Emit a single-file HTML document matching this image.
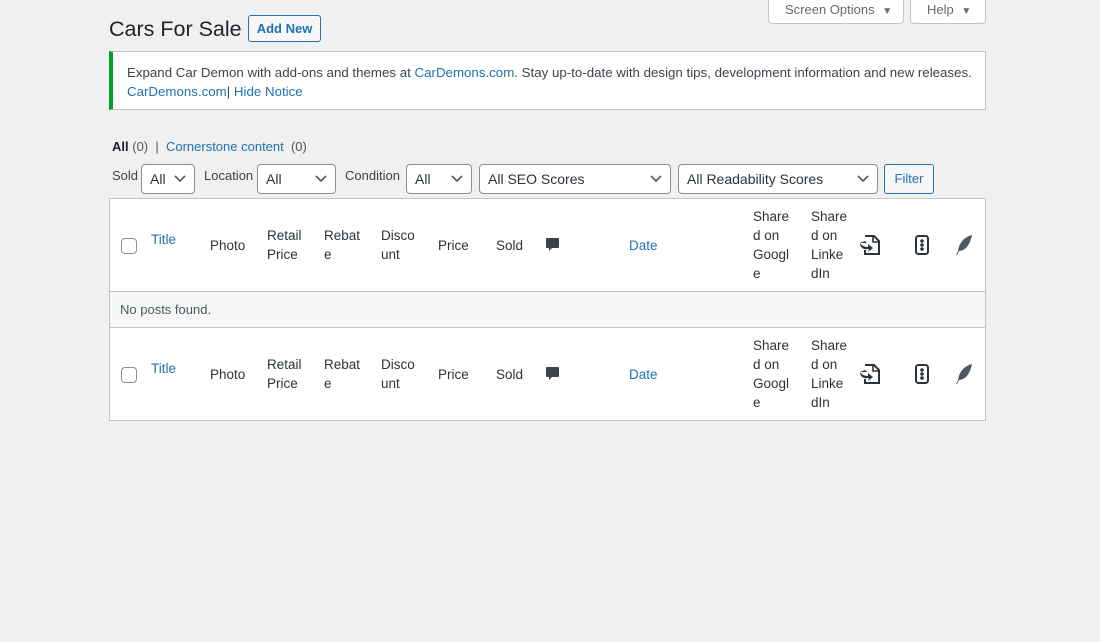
<!DOCTYPE html>
<html><head><meta charset="utf-8"><style>
*{margin:0;padding:0;box-sizing:border-box}
body{width:1100px;height:642px;background:#f0f0f1;font-family:"Liberation Sans",sans-serif;font-size:13px;color:#3c434a;position:relative;overflow:hidden}
.a{position:absolute;white-space:nowrap}
a,.l{color:#2271b1;text-decoration:none}
.btn{position:absolute;border:1px solid #2271b1;color:#2271b1;background:#f6f7f7;border-radius:3px;text-align:center}
.sel{position:absolute;height:30px;border:1px solid #8c8f94;border-radius:4px;background:#fff;color:#2c3338;font-size:14px;line-height:28px;padding-left:8px}
.sel svg{position:absolute;right:8px;top:10px}
.hd{position:absolute;line-height:19px;font-size:13.5px;color:#2c3338}
.cb{position:absolute;width:16px;height:16px;border:1px solid #8c8f94;border-radius:4px;background:#fff}
</style></head><body>
<div class="a" style="left:768px;top:-2px;width:136px;height:26px;background:#fff;border:1px solid #c3c4c7;border-radius:0 0 4px 4px;font-size:13px;color:#646970;line-height:22px;padding-left:16px">Screen Options <span style="font-size:10px;margin-left:4px">▼</span></div>
<div class="a" style="left:910px;top:-2px;width:76px;height:26px;background:#fff;border:1px solid #c3c4c7;border-radius:0 0 4px 4px;font-size:13px;color:#646970;line-height:22px;padding-left:16px">Help <span style="font-size:10px;margin-left:4px">▼</span></div>
<div class="a" style="left:109px;top:14px;font-size:21.5px;color:#1d2327;line-height:30px">Cars For Sale</div>
<div class="btn" style="left:248px;top:15px;width:73px;height:27px;line-height:25px;font-size:13px;font-weight:600">Add New</div>
<div class="a" style="left:109px;top:51px;width:877px;height:59px;background:#fff;border:1px solid #c3c4c7;border-left:4px solid #00a32a"></div>
<div class="a" style="left:127px;top:63px;line-height:19px;color:#3c434a;font-size:13.3px">Expand Car Demon with add-ons and themes at <a>CarDemons.com</a>. Stay up-to-date with design tips, development information and new releases.<br><a>CarDemons.com</a>| <a>Hide Notice</a></div>
<div class="a" style="left:112px;top:138px;line-height:17px;color:#50575e"><b style="color:#1d2327;font-weight:600">All</b> (0) &nbsp;|&nbsp; <a>Cornerstone content</a> &nbsp;(0)</div>
<div class="a" style="left:112px;top:168px">Sold</div>
<div class="sel" style="left:141px;top:164px;width:54px">All<svg width="12" height="8"><path d="M1 1l5 5 5-5" fill="none" stroke="#50575e" stroke-width="1.6"/></svg></div>
<div class="a" style="left:204px;top:168px">Location</div>
<div class="sel" style="left:257px;top:164px;width:79px">All<svg width="12" height="8"><path d="M1 1l5 5 5-5" fill="none" stroke="#50575e" stroke-width="1.6"/></svg></div>
<div class="a" style="left:345px;top:168px">Condition</div>
<div class="sel" style="left:406px;top:164px;width:66px">All<svg width="12" height="8"><path d="M1 1l5 5 5-5" fill="none" stroke="#50575e" stroke-width="1.6"/></svg></div>
<div class="sel" style="left:479px;top:164px;width:192px">All SEO Scores<svg width="12" height="8"><path d="M1 1l5 5 5-5" fill="none" stroke="#50575e" stroke-width="1.6"/></svg></div>
<div class="sel" style="left:678px;top:164px;width:200px">All Readability Scores<svg width="12" height="8"><path d="M1 1l5 5 5-5" fill="none" stroke="#50575e" stroke-width="1.6"/></svg></div>
<div class="btn" style="left:884px;top:164px;width:50px;height:30px;line-height:28px;font-size:13px">Filter</div>
<div class="a" style="left:109px;top:198px;width:877px;height:223px;background:#fff;border:1px solid #c3c4c7"></div>
<div class="a" style="left:110px;top:291px;width:875px;height:37px;background:#f6f7f7;border-top:1px solid #c3c4c7;border-bottom:1px solid #c3c4c7"></div>
<div class="a" style="left:120px;top:302px;color:#50575e">No posts found.</div>
<div id="r1"></div>
<script>
function row(y){
var h='';
h+='<div class="cb" style="left:121px;top:'+(y+31)+'px"></div>';
var c=[[151,'Title',1,-6],[210,'Photo',0,0],[267,'Retail<br>Price',0,-10],[324,'Rebat<br>e',0,-10],[381,'Disco<br>unt',0,-10],[438,'Price',0,0],[496,'Sold',0,0],[629,'Date',1,0],[753,'Share<br>d on<br>Googl<br>e',0,-29],[811,'Share<br>d on<br>Linke<br>dIn',0,-29]];
c.forEach(function(k){h+='<div class="hd'+(k[2]?' l':'')+'" style="left:'+k[0]+'px;top:'+(y+29+k[3])+'px'+(k[2]?';color:#2271b1':'')+'">'+k[1]+'</div>';});
h+='<svg class="a" style="left:545px;top:'+(y+30)+'px" width="16" height="16"><path d="M2 1h11a1 1 0 0 1 1 1v8a1 1 0 0 1-1 1H7l-3 3v-3H2a1 1 0 0 1-1-1V2a1 1 0 0 1 1-1z" fill="#3c434a"/></svg>';
h+='<svg class="a" style="left:859px;top:'+(y+27)+'px" width="22" height="22"><path d="M6 2h9l5 5v13H6v-4" fill="none" stroke="#2c3338" stroke-width="2"/><path d="M14 2v6h6" fill="none" stroke="#2c3338" stroke-width="1.6"/><path d="M1 9h7l-2-2M1 9c0 5 4 7 9 6l-1 3 5-4-5-4v3c-3 0-6-1-8-4z" fill="#2c3338"/></svg>';
h+='<svg class="a" style="left:914px;top:'+(y+28)+'px" width="16" height="20"><rect x="2" y="1" width="12" height="18" rx="2.5" fill="none" stroke="#2c3338" stroke-width="2"/><circle cx="8" cy="6" r="1.8" fill="#2c3338"/><circle cx="8" cy="10" r="1.8" fill="#2c3338"/><circle cx="8" cy="14" r="1.8" fill="#2c3338"/></svg>';
h+='<svg class="a" style="left:954px;top:'+(y+27)+'px" width="20" height="22"><path d="M18 1C10 3 5 9 4 17l-2 4 1 0 2-4c6 0 11-6 13-16z" fill="#50575e"/></svg>';
return h;}
document.getElementById('r1').innerHTML=row(207)+row(336);
</script>
</body></html>
